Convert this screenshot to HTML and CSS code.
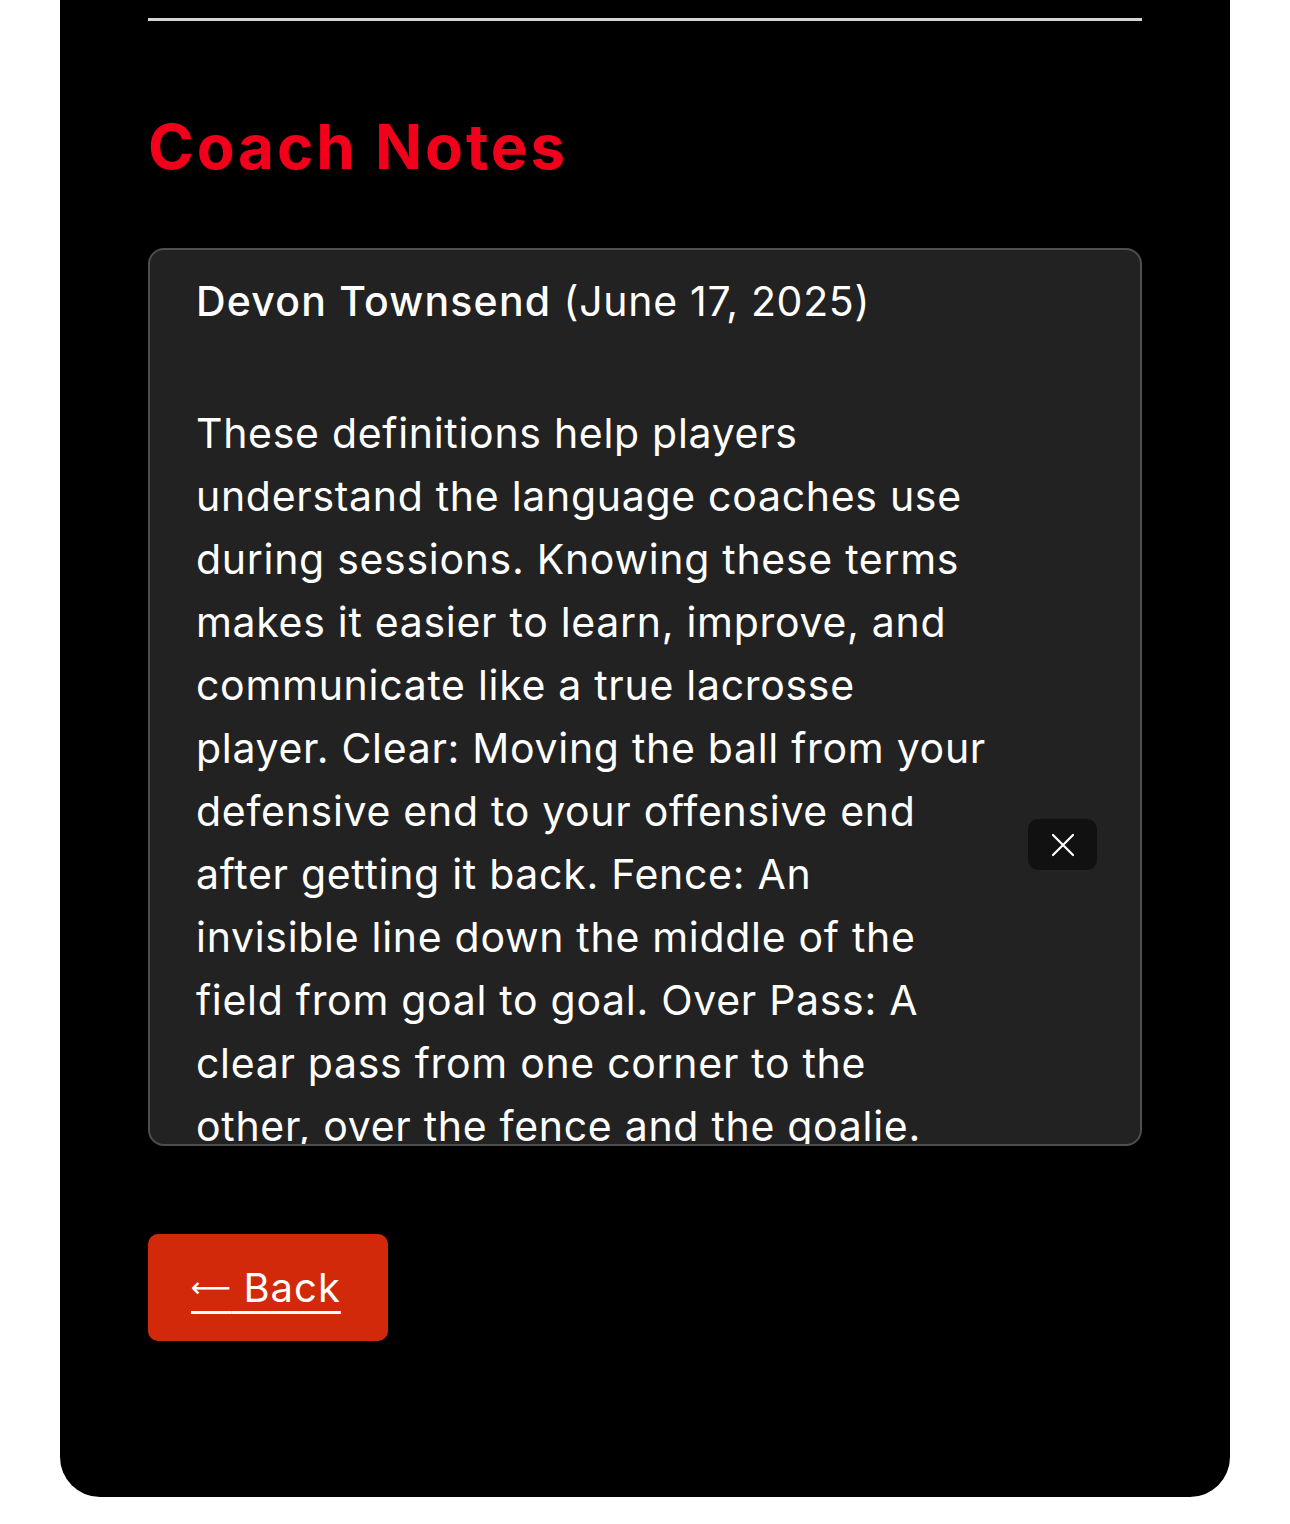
FILE: index.html
```html
<!DOCTYPE html>
<html lang="en">
<head>
    <meta charset="UTF-8">
    <meta name="viewport" content="width=device-width, initial-scale=1.0">
    <title>Coach Notes</title>
    <link rel="stylesheet" href="styles.css">
</head>
<body>
    <div class="card">
        <hr class="divider">

        <h1 class="title">Coach Notes</h1>

        <div class="notes">
            <div class="note">
                <div class="note-text">
                    <div class="note-head"><strong>Devon Townsend</strong> (June 17, 2025)</div>
                    <p class="note-body">These definitions help players<br>
                        understand the language coaches use<br>
                        during sessions. Knowing these terms<br>
                        makes it easier to learn, improve, and<br>
                        communicate like a true lacrosse<br>
                        player. Clear: Moving the ball from your<br>
                        defensive end to your offensive end<br>
                        after getting it back. Fence: An<br>
                        invisible line down the middle of the<br>
                        field from goal to goal. Over Pass: A<br>
                        clear pass from one corner to the<br>
                        other, over the fence and the goalie.</p>
                </div>
                <button class="close-btn" aria-label="Delete note">
                    <svg width="24" height="24" viewBox="0 0 24 24" fill="none" stroke="#fff" stroke-width="2.2" stroke-linecap="round">
                        <path d="M2 2 L22 22 M22 2 L2 22"/>
                    </svg>
                </button>
            </div>
        </div>

        <a class="back-btn" href="#"><span class="arrow">&#10229;</span> Back</a>
    </div>
</body>
</html>
```

FILE: styles.css
```css
body {
    margin: 0;
    padding: 0 60px 26px;
    background: #fff;
    font-family: 'Inter', sans-serif;
}

.card {
    background: #000;
    border-radius: 0 0 40px 40px;
    padding: 18px 88px 156px;
}

.divider {
    margin: 0;
    border: none;
    height: 3px;
    background: #d4d4d4;
}

.title {
    margin: 88px 0 63px;
    font-size: 62px;
    line-height: 76px;
    font-weight: 700;
    color: #f2001b;
    letter-spacing: 2.8px;
}

.notes {
    height: 894px;
    background: #222;
    border: 2px solid #4e4e4e;
    border-radius: 16px;
    overflow: hidden;
}

.note {
    display: flex;
    align-items: flex-start;
    gap: 30px;
    padding: 26px 43px 0 46px;
}

.note-text {
    flex: 1;
    color: #fff;
    font-size: 41px;
    letter-spacing: 0.7px;
}

.note-head {
    line-height: 50px;
    white-space: nowrap;
}

.note-head strong {
    font-weight: 500;
    letter-spacing: 1.2px;
}

.note-body {
    margin: 76px 0 0;
    line-height: 63px;
    white-space: nowrap;
}

.close-btn {
    margin-top: 543px;
    width: 69px;
    height: 51px;
    flex-shrink: 0;
    background: #111;
    border: none;
    border-radius: 10px;
    display: flex;
    align-items: center;
    justify-content: center;
    cursor: pointer;
}

.back-btn {
    display: inline-block;
    margin-top: 88px;
    padding: 24px 47px 24px 43px;
    background: #d2290a;
    color: #fff;
    font-size: 40px;
    line-height: 59px;
    letter-spacing: 1px;
    border-radius: 10px;
    text-decoration: underline;
    text-decoration-thickness: 3px;
    text-underline-offset: 9px;
}

.arrow {
    font-family: 'DejaVu Sans', sans-serif;
    font-size: 28px;
    line-height: 1;
    letter-spacing: 0;
    vertical-align: 5px;
}
```
